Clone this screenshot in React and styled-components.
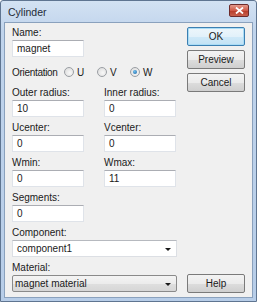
import React from "react";
import styled, { createGlobalStyle, css } from "styled-components";

const Global = createGlobalStyle`
  html, body { margin: 0; padding: 0; background: #ffffff; }
  * { box-sizing: border-box; }
`;

const Window = styled.div`
  width: 257px;
  height: 302px;
  border: 1px solid #5f7591;
  border-radius: 3px 3px 0 0;
  background: linear-gradient(#d3e2f3, #c0d4ec 30px, #b7cde8);
  display: flex;
  flex-direction: column;
  padding: 0 3px 3px 3px;
  font-family: "Liberation Sans", Arial, sans-serif;
  font-size: 10px;
  color: #1a1a1a;
`;

const TitleBar = styled.div`
  height: 21px;
  display: flex;
  align-items: center;
  justify-content: space-between;
  padding: 0 4px 0 4px;
`;

const Title = styled.span`
  font-family: "Liberation Sans", Arial, sans-serif;
  font-size: 10.5px;
  color: #1e2a36;
`;

const CloseBtn = styled.div`
  width: 20px;
  height: 13px;
  margin-top: -3px;
  border: 1px solid #6d2b2b;
  border-radius: 2px;
  background: linear-gradient(#e49a8c, #cf5a48 50%, #b73a28 51%, #c8604c);
  display: flex;
  align-items: center;
  justify-content: center;
`;

const Content = styled.div`
  flex: 1;
  background: #f0f0f0;
  border: 1px solid #8aa1bd;
  display: flex;
  justify-content: space-between;
  padding: 4px 7px 4px 7px;
`;

const Form = styled.div`
  width: 165px;
  display: flex;
  flex-direction: column;
  gap: 5px;
`;

const Pair = styled.div`
  display: grid;
  grid-template-columns: 72px 72px;
  column-gap: 20px;
`;

const Field = styled.div`
  display: flex;
  flex-direction: column;
  width: ${(p) => (p.$wide ? "165px" : "72px")};
`;

const Label = styled.div`
  height: 12px;
  line-height: 12px;
  margin-bottom: 1px;
  white-space: nowrap;
`;

const Input = styled.div`
  height: 17px;
  background: #fff;
  border: 1px solid #dfe3e9;
  border-top-color: #abadb3;
  padding-left: 4px;
  line-height: 15px;
`;

const Combo = styled.div`
  height: 17px;
  display: flex;
  align-items: center;
  justify-content: space-between;
  padding: 0 5px 0 ${(p) => (p.$button ? "2px" : "4px")};
  ${(p) =>
    p.$button
      ? css`
          border: 1px solid #8a8a8a;
          border-radius: 2px;
          background: linear-gradient(#f4f4f4, #ececec 50%, #dfdfdf 51%, #d6d6d6);
        `
      : css`
          border: 1px solid #dcdfe4;
          border-top-color: #b6b9bf;
          background: #fff;
        `}
`;

const Arrow = styled.span`
  width: 0;
  height: 0;
  border-left: 3px solid transparent;
  border-right: 3px solid transparent;
  border-top: 3px solid #1a1a1a;
  margin-top: 1px;
`;

const OrientRow = styled.div`
  height: 20px;
  display: flex;
  align-items: center;
`;

const OrientLabel = styled.span`
  width: 52px;
  letter-spacing: -0.3px;
`;

const RadioOpt = styled.span`
  width: 33px;
  display: inline-flex;
  align-items: center;
  gap: 3px;
`;

const RadioCircle = styled.span`
  width: 10px;
  height: 10px;
  border-radius: 50%;
  border: 1px solid #9a9ea3;
  background: radial-gradient(circle at 60% 60%, #f8f8f8, #d8d8d8);
  display: inline-flex;
  align-items: center;
  justify-content: center;
  &::after {
    content: "";
    display: ${(p) => (p.$checked ? "block" : "none")};
    width: 4px;
    height: 4px;
    border-radius: 50%;
    background: radial-gradient(circle at 40% 35%, #6cc0f0, #1b5f9e);
  }
`;

const Buttons = styled.div`
  width: 58px;
  display: flex;
  flex-direction: column;
  justify-content: space-between;
`;

const BtnGroup = styled.div`
  display: flex;
  flex-direction: column;
  gap: 4px;
`;

const Button = styled.div`
  height: 19px;
  border: 1px solid ${(p) => (p.$default ? "#3c7fb1" : "#7a7a7a")};
  border-radius: 2px;
  background: linear-gradient(#f3f3f3, #ebebeb 50%, #dddddd 51%, #cfcfcf);
  display: flex;
  align-items: center;
  justify-content: center;
  ${(p) =>
    p.$default &&
    css`
      box-shadow: inset 0 0 0 1px #a9dcf6;
      background: linear-gradient(#edf6fb, #e2f1fa 50%, #cfe9f8 51%, #c2e2f5);
    `}
`;

export default function App() {
  return (
    <>
      <Global />
      <Window>
        <TitleBar>
          <Title>Cylinder</Title>
          <CloseBtn>
            <svg width="9" height="7" viewBox="0 0 9 7">
              <path d="M1 0.5 L8 6.5 M8 0.5 L1 6.5" stroke="#fff" strokeWidth="1.8" />
            </svg>
          </CloseBtn>
        </TitleBar>
        <Content>
          <Form>
            <Field>
              <Label>Name:</Label>
              <Input>magnet</Input>
            </Field>
            <OrientRow>
              <OrientLabel>Orientation</OrientLabel>
              <RadioOpt><RadioCircle />U</RadioOpt>
              <RadioOpt><RadioCircle />V</RadioOpt>
              <RadioOpt><RadioCircle $checked />W</RadioOpt>
            </OrientRow>
            <Pair>
              <Field>
                <Label>Outer radius:</Label>
                <Input>10</Input>
              </Field>
              <Field>
                <Label>Inner radius:</Label>
                <Input>0</Input>
              </Field>
            </Pair>
            <Pair>
              <Field>
                <Label>Ucenter:</Label>
                <Input>0</Input>
              </Field>
              <Field>
                <Label>Vcenter:</Label>
                <Input>0</Input>
              </Field>
            </Pair>
            <Pair>
              <Field>
                <Label>Wmin:</Label>
                <Input>0</Input>
              </Field>
              <Field>
                <Label>Wmax:</Label>
                <Input>11</Input>
              </Field>
            </Pair>
            <Field>
              <Label>Segments:</Label>
              <Input>0</Input>
            </Field>
            <Field $wide>
              <Label>Component:</Label>
              <Combo>
                <span>component1</span>
                <Arrow />
              </Combo>
            </Field>
            <Field $wide>
              <Label>Material:</Label>
              <Combo $button>
                <span>magnet material</span>
                <Arrow />
              </Combo>
            </Field>
          </Form>
          <Buttons>
            <BtnGroup>
              <Button $default>OK</Button>
              <Button>Preview</Button>
              <Button>Cancel</Button>
            </BtnGroup>
            <Button>Help</Button>
          </Buttons>
        </Content>
      </Window>
    </>
  );
}
